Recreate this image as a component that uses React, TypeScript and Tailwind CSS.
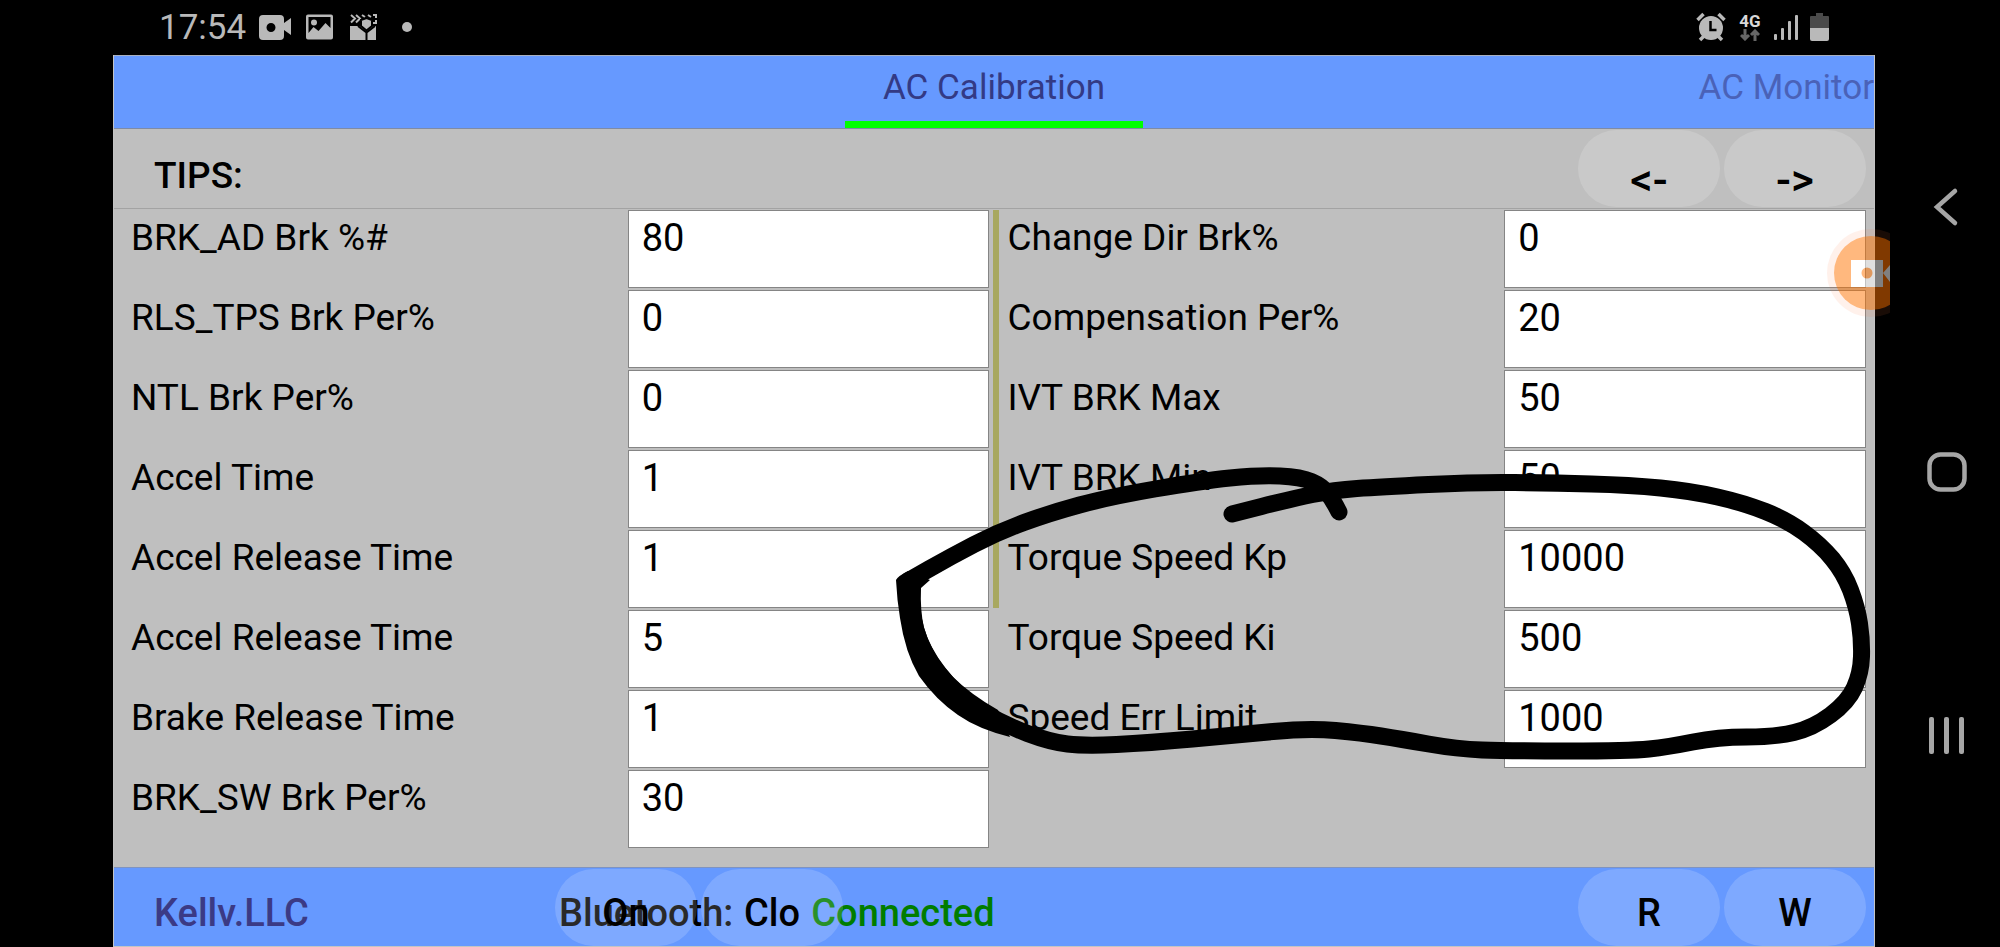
import { ReactNode } from "react";

type Param = { id: string; label: string; value: string };
type Point = [number, number];

const leftParams: Param[] = [
  { id: "brk-ad", label: "BRK_AD Brk %#", value: "80" },
  { id: "rls-tps", label: "RLS_TPS Brk Per%", value: "0" },
  { id: "ntl-brk", label: "NTL Brk Per%", value: "0" },
  { id: "accel-time", label: "Accel Time", value: "1" },
  { id: "accel-release-1", label: "Accel Release Time", value: "1" },
  { id: "accel-release-2", label: "Accel Release Time", value: "5" },
  { id: "brake-release", label: "Brake Release Time", value: "1" },
  { id: "brk-sw", label: "BRK_SW Brk Per%", value: "30" },
];

const rightParams: Param[] = [
  { id: "change-dir", label: "Change Dir Brk%", value: "0" },
  { id: "compensation", label: "Compensation Per%", value: "20" },
  { id: "ivt-max", label: "IVT BRK Max", value: "50" },
  { id: "ivt-min", label: "IVT BRK Min", value: "50" },
  { id: "torque-kp", label: "Torque Speed Kp", value: "10000" },
  { id: "torque-ki", label: "Torque Speed Ki", value: "500" },
  { id: "speed-err", label: "Speed Err Limit", value: "1000" },
];

// marker line, upper left arc
const arcPoints: Point[] = [
  [1339, 512], [1333, 500], [1322, 486], [1301, 477], [1259, 475], [1201, 481],
  [1109, 497], [1050, 513], [998, 532], [950, 557], [908, 581],
];

// marker line, from the left corner all the way round to the top
const loopPoints: Point[] = [
  [909, 583], [910, 607], [921, 650], [957, 697], [1005, 725], [1050, 742],
  [1085, 746], [1148, 743], [1237, 735], [1309, 728], [1362, 733], [1400, 739],
  [1457, 749], [1507, 751], [1630, 751], [1668, 747], [1718, 737], [1775, 737],
  [1813, 728], [1848, 702], [1861, 673], [1862, 640], [1857, 607], [1844, 573],
  [1821, 545], [1787, 520], [1744, 503], [1691, 491], [1630, 485], [1553, 483],
  [1477, 482], [1380, 487], [1334, 490], [1291, 499], [1232, 514],
];

function smoothPath(points: Point[]) {
  let d = `M${points[0][0]} ${points[0][1]}`;
  for (let i = 1; i < points.length - 1; i++) {
    const [x, y] = points[i];
    const [nx, ny] = points[i + 1];
    d += ` Q${x} ${y} ${(x + nx) / 2} ${(y + ny) / 2}`;
  }
  const last = points[points.length - 1];
  return `${d} L${last[0]} ${last[1]}`;
}

const ParamList = ({ params }: { params: Param[] }) => (
  <div className="flex flex-col gap-[2px]">
    {params.map((param) => (
      <div key={param.id} className="grid grid-cols-[497fr_362fr]">
        <label
          htmlFor={param.id}
          className="min-w-0 pt-[2px] text-[37px] leading-[52px] whitespace-nowrap"
        >
          {param.label}
        </label>
        <input
          id={param.id}
          type="text"
          defaultValue={param.value}
          className="h-[78px] w-full min-w-0 border border-[#858585] bg-white pb-[22px] pl-[13px] text-[38px] leading-[52px] outline-none"
        />
      </div>
    ))}
  </div>
);

const PillButton = ({ children }: { children: ReactNode }) => (
  <button
    type="button"
    className="w-[142px] h-[77px] rounded-full bg-white/16 pt-3 text-[38px] leading-[44px] font-medium"
  >
    {children}
  </button>
);

const ArrowButton = ({ label, children }: { label: string; children: ReactNode }) => (
  <button
    type="button"
    aria-label={label}
    className="w-[142px] h-[77px] rounded-full bg-white/16 pt-[22px] text-[44px] leading-[44px] font-medium"
  >
    {children}
  </button>
);

const StatusBar = () => (
  <div className="flex h-[55px] items-center justify-between pl-[159px] pr-[46px] pb-px text-[#b9b9b9]">
    <div className="flex items-center">
      <span className="w-[100px] pt-px text-[35px] leading-[44px]">17:54</span>
      <svg width="160" height="30" viewBox="0 0 160 30" fill="currentColor">
        <path
          fillRule="evenodd"
          d="M4 3h17q4 0 4 4v4l7-5v17l-7-5v6q0 4-4 4H4q-4 0-4-4V7q0-4 4-4zm8 8a4.500 4.500 0 1 0 0 9 4.500 4.500 0 0 0 0-9z"
        />
        <path
          fillRule="evenodd"
          d="M49 2.500h23q2 0 2 2v21q0 2-2 2H49q-2 0-2-2v-21q0-2 2-2zM49.500 5v16l5-6 5 4 7-8 5 5V5zM55 7.500a3 3 0 1 1 0 6 3 3 0 0 1 0-6z"
        />
        <path d="M91 14h26v14H91z" />
        <path
          d="M92 3l4 3.500-4 4M97 3l4 3.500-4 4M103 3l3 2M109 3l3 2M114 3h3v3M117 8v3h-3"
          fill="none"
          stroke="currentColor"
          strokeWidth="2"
        />
        <path d="M102 8l5.500-2 5.500 2v6l-5.500 4.500-5.500-4.500z" stroke="#000" strokeWidth="2" />
        <path
          d="M99 14l8.500 6.500 8.500-6.500M107.500 20v9"
          fill="none"
          stroke="#000"
          strokeWidth="2"
        />
        <circle cx="148" cy="15" r="5" />
      </svg>
    </div>
    <div className="flex items-center gap-3">
      <svg width="30" height="30" viewBox="0 0 30 30" fill="currentColor">
        <circle cx="15" cy="16" r="12" />
        <path
          d="M1.500 8l6-6M28.500 8l-6-6M4 28l4-4M26 28l-4-4"
          stroke="currentColor"
          strokeWidth="3.500"
        />
        <path d="M14.500 9v9h6" fill="none" stroke="#000" strokeWidth="2.500" />
      </svg>
      <div className="flex w-6 flex-col items-center">
        <span className="text-[17px] leading-4 font-bold text-[#d8d8d8]">4G</span>
        <svg width="20" height="12" viewBox="0 0 20 12" fill="none" stroke="#666" strokeWidth="3">
          <path d="M5 0v10M1 6l4 4 4-4M15 12V2M11 6l4-4 4 4" />
        </svg>
      </div>
      <svg width="24" height="28" viewBox="0 0 24 28" fill="currentColor">
        <rect x="0" y="21" width="3" height="6" rx="1" />
        <rect x="7" y="15" width="3" height="12" rx="1" />
        <rect x="14" y="8" width="3" height="19" rx="1" />
        <rect x="21" y="2" width="3" height="25" rx="1" />
      </svg>
      <svg width="19" height="28" viewBox="0 0 19 28">
        <path d="M6 0h7v3h5q1 0 1 1v11H0V4q0-1 1-1h5z" fill="#4a4a4a" />
        <path d="M0 15h19v11q0 2-2 2H2q-2 0-2-2z" fill="#b9b9b9" />
      </svg>
    </div>
  </div>
);

const NavBar = () => (
  <nav className="flex w-[125px] shrink-0 flex-col items-center justify-between pt-[187px] pb-[191px] pl-[18px]">
    <button type="button" aria-label="Back">
      <svg width="40" height="40" viewBox="0 0 40 40" fill="none" stroke="#a6a6a6" strokeWidth="4.500">
        <path d="M28 4L10 20l18 16" strokeLinecap="round" />
      </svg>
    </button>
    <button type="button" aria-label="Home">
      <svg width="40" height="40" viewBox="0 0 40 40" fill="none" stroke="#a6a6a6" strokeWidth="4.500">
        <rect x="2.500" y="2.500" width="35" height="35" rx="11" />
      </svg>
    </button>
    <button type="button" aria-label="Recent apps">
      <svg width="40" height="40" viewBox="0 0 40 40" fill="#a6a6a6">
        <rect x="2" y="1" width="5" height="37" rx="2" />
        <rect x="17" y="1" width="5" height="37" rx="2" />
        <rect x="32" y="1" width="5" height="37" rx="2" />
      </svg>
    </button>
  </nav>
);

const App = () => {
  return (
    <div className="flex min-h-screen bg-black font-[Roboto,sans-serif] text-black">
      <div className="flex min-w-0 flex-1 flex-col">
        <StatusBar />
        <main className="relative ml-[113px] flex flex-1 flex-col border-x border-b border-[#c4c4c4] bg-[#bfbfbf]">
          <header className="grid h-[74px] grid-cols-[1fr_298px_1fr] overflow-hidden border-t border-b border-t-[#a8b0c0] border-b-[#7f8ba5] bg-[#6699ff] text-[35px] leading-[64px]">
            <a
              href="#calibration"
              className="col-start-2 border-b-[7px] border-[#00ff00] text-center text-[#333a85]"
            >
              AC Calibration
            </a>
            <a
              href="#monitor"
              className="justify-self-end whitespace-nowrap text-[#4a62b8]"
            >
              AC Monitor
            </a>
          </header>

          <div className="flex h-20 items-center justify-between border-b border-[#a3a3a3] pl-10 pr-2">
            <span className="pt-[14px] text-[37px] leading-[44px] font-medium">TIPS:</span>
            <div className="flex gap-1">
              <ArrowButton label="Previous page">&lt;-</ArrowButton>
              <ArrowButton label="Next page">-&gt;</ArrowButton>
            </div>
          </div>

          <div className="flex flex-1 items-start pt-px pl-[17px] pr-2">
            <div className="min-w-0 flex-1">
              <ParamList params={leftParams} />
            </div>
            <div className="ml-[3px] mr-[9px] h-[398px] w-[6px] bg-[#a8a860]" />
            <div className="min-w-0 flex-1">
              <ParamList params={rightParams} />
            </div>
          </div>

          <footer className="flex h-[79px] items-center border-t border-[#7f93c0] bg-[#6699ff] pl-10 pr-2 text-[38px] leading-[44px] font-medium">
            <span className="w-[401px] pt-3 text-[#3b3a85]">Kellv.LLC</span>
            <div className="relative">
              {/* connection status sits under the translucent buttons */}
              <div className="absolute inset-y-0 left-1 flex items-center gap-[78px] pt-3">
                <span>Bluetooth:</span>
                <span className="text-[#007d00]">Connected</span>
              </div>
              <div className="relative flex gap-1">
                <PillButton>On</PillButton>
                <PillButton>Clo</PillButton>
              </div>
            </div>
            <div className="ml-auto flex gap-1">
              <PillButton>R</PillButton>
              <PillButton>W</PillButton>
            </div>
          </footer>

          {/* floating screen recorder bubble */}
          <button type="button" aria-label="Recorder" className="absolute top-[174px] -right-4 opacity-50">
            <svg width="63" height="88" viewBox="0 0 63 88">
              <circle cx="44" cy="44" r="44" fill="#ff7a40" fillOpacity="0.2" />
              <circle cx="44" cy="44" r="37" fill="#ff7300" />
              <path d="M24 31h32v27H24zM56 44l7-8v17z" fill="#fff" />
              <circle cx="40" cy="44" r="5.500" fill="#ff7300" />
            </svg>
          </button>

          {/* marker annotation */}
          <svg
            className="pointer-events-none absolute inset-0 size-full"
            viewBox="114 55 1760 891"
            preserveAspectRatio="none"
            fill="none"
            stroke="#000"
            strokeWidth="17"
            strokeLinecap="round"
            strokeLinejoin="round"
          >
            <path d={smoothPath(arcPoints)} />
            <path d={smoothPath(loopPoints)} />
            {/* the pen presses harder at the left corner */}
            <path
              d="M908 571L930 580L921 588Q920 610 924 628Q932 655 952 676Q970 694 998 710L1010 737Q978 729 958 715Q936 700 919 676Q905 652 900 618Q897 600 896 580Q898 576 908 571Z"
              fill="#000"
              stroke="none"
            />
          </svg>
        </main>
      </div>
      <NavBar />
    </div>
  );
};

export default App;
